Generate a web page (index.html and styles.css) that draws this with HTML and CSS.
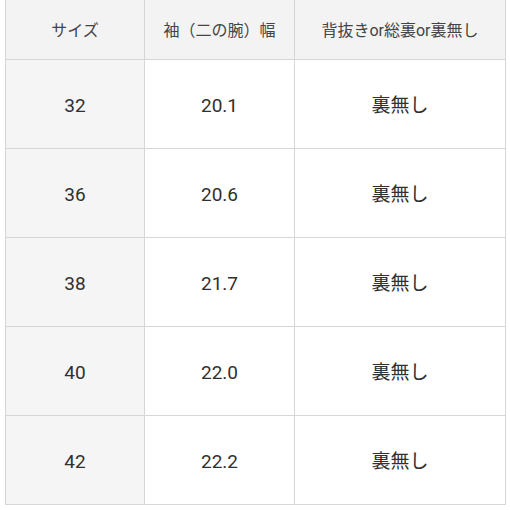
FILE: index.html
```html
<!DOCTYPE html>
<html lang="ja">
<head>
<meta charset="utf-8">
<link rel="stylesheet" href="styles.css">
</head>
<body>
<div class="sheet">
  <div class="cell head">サイズ</div>
  <div class="cell head">袖（二の腕）幅</div>
  <div class="cell head">背抜きor総裏or裏無し</div>

  <div class="cell size">32</div>
  <div class="cell">20.1</div>
  <div class="cell">裏無し</div>

  <div class="cell size">36</div>
  <div class="cell">20.6</div>
  <div class="cell">裏無し</div>

  <div class="cell size">38</div>
  <div class="cell">21.7</div>
  <div class="cell">裏無し</div>

  <div class="cell size">40</div>
  <div class="cell">22.0</div>
  <div class="cell">裏無し</div>

  <div class="cell size">42</div>
  <div class="cell">22.2</div>
  <div class="cell">裏無し</div>
</div>
</body>
</html>
```

FILE: styles.css
```css
html, body {
  margin: 0;
  padding: 0;
  background: #ffffff;
}
body {
  width: 510px;
  height: 510px;
  overflow: hidden;
  font-family: Roboto, "Noto Sans CJK JP", sans-serif;
  color: #303030;
}
.sheet {
  margin-left: 5px;
  width: 501px;
  display: grid;
  grid-template-columns: 138px 149px 210px;
  grid-template-rows: 59px repeat(5, 88px);
  gap: 1px;
  padding: 0 1px 1px 1px;
  box-sizing: border-box;
  background: #d6d6d6;
}
.cell {
  display: flex;
  align-items: center;
  justify-content: center;
  background: #ffffff;
  font-size: 19px;
  line-height: 1;
  padding-top: 2px;
}
.head {
  background: #f3f3f3;
  font-size: 16px;
  color: #444444;
  padding-top: 3px;
}
.size {
  background: #f5f5f5;
}
```
